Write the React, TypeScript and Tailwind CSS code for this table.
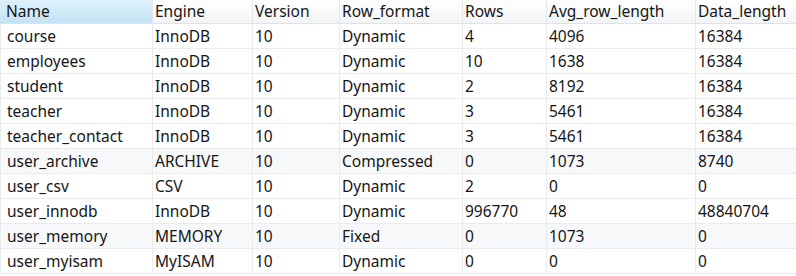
import React from "react";

const cols = [
  { key: "Name", w: "w-[152px]" },
  { key: "Engine", w: "w-[100px]" },
  { key: "Version", w: "w-[87px]" },
  { key: "Row_format", w: "w-[123px]" },
  { key: "Rows", w: "w-[84px]" },
  { key: "Avg_row_length", w: "w-[149px]" },
  { key: "Data_length", w: "flex-1" },
];

const rows: string[][] = [
  ["course", "InnoDB", "10", "Dynamic", "4", "4096", "16384"],
  ["employees", "InnoDB", "10", "Dynamic", "10", "1638", "16384"],
  ["student", "InnoDB", "10", "Dynamic", "2", "8192", "16384"],
  ["teacher", "InnoDB", "10", "Dynamic", "3", "5461", "16384"],
  ["teacher_contact", "InnoDB", "10", "Dynamic", "3", "5461", "16384"],
  ["user_archive", "ARCHIVE", "10", "Compressed", "0", "1073", "8740"],
  ["user_csv", "CSV", "10", "Dynamic", "2", "0", "0"],
  ["user_innodb", "InnoDB", "10", "Dynamic", "996770", "48", "48840704"],
  ["user_memory", "MEMORY", "10", "Fixed", "0", "1073", "0"],
  ["user_myisam", "MyISAM", "10", "Dynamic", "0", "0", "0"],
];

const tinted = new Set([5, 8]);

export default function App() {
  return (
    <div
      className="w-[796px] h-[276px] bg-white overflow-hidden text-[15.5px] text-[#161616]"
      style={{ fontFamily: '"Noto Sans", "Open Sans", sans-serif' }}
    >
      <div className="flex h-[24px] border-b border-[#dde3e8]">
        {cols.map((c, i) => (
          <div
            key={c.key}
            className={`${c.w} shrink-0 flex items-center leading-none pt-[1px] ${
              i === 0
                ? "pl-[6px] bg-gradient-to-b from-[#def1fb] to-[#c3e3f4]"
                : "pl-[2px] bg-gradient-to-b from-[#ffffff] to-[#f3f4f6] border-l border-[#e3e6ea]"
            }`}
          >
            {c.key}
          </div>
        ))}
      </div>
      {rows.map((r, ri) => (
        <div
          key={ri}
          className={`flex h-[25px] border-b border-[#e9ecef] ${
            tinted.has(ri) ? "bg-[#f6f8fa]" : "bg-white"
          }`}
        >
          {r.map((v, ci) => (
            <div
              key={ci}
              className={`${cols[ci].w} shrink-0 flex items-center leading-none pt-[2px] ${
                ci === 0 ? "pl-[6px] border-l border-[#e9ecef]" : "pl-[2px] border-l border-[#e9ecef]"
              }`}
            >
              {v}
            </div>
          ))}
        </div>
      ))}
    </div>
  );
}
